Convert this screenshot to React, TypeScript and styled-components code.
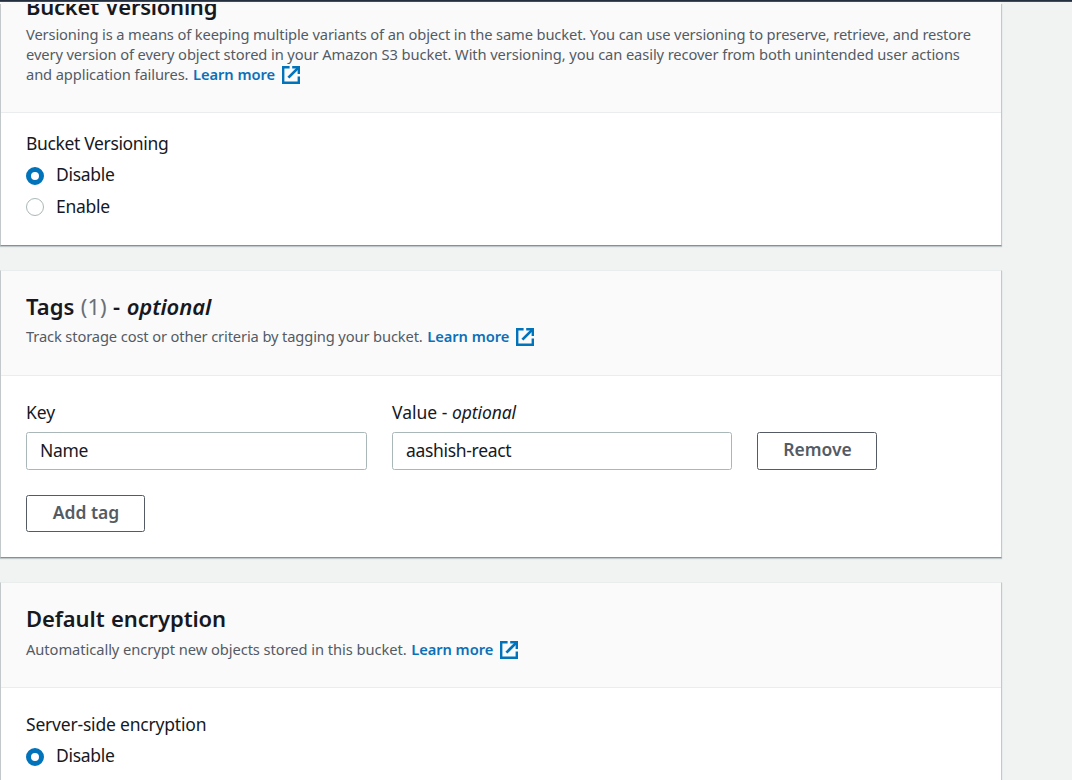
import React, { useState } from 'react';
import styled, { createGlobalStyle } from 'styled-components';

const GlobalStyle = createGlobalStyle`
  *, *::before, *::after { box-sizing: border-box; }
  html, body { margin: 0; padding: 0; height: 100%; background: #f1f3f3; }
  body, input, button { font-family: 'Noto Sans', 'Open Sans', sans-serif; }
`;

const Page = styled.div`
  display: flex;
  flex-direction: column;
  height: 780px;
  overflow: hidden;
  background: #f1f3f3;
  color: #16191f;
`;

const TopBar = styled.div`
  flex: none;
  height: 2px;
  background: #232f3e;
  border-bottom: 1px solid #414b5a;
`;

const Gutter = styled.div`
  flex: none;
  height: 2px;
  width: 1001px;
  background: #f9f9f9;
`;

const ScrollArea = styled.main`
  flex: 1;
  min-height: 0;
  overflow: hidden;
`;

const Stack = styled.div`
  display: flex;
  flex-direction: column;
  gap: 24px;
  width: 1002px;
  margin-top: -34px;
`;

const Card = styled.section`
  background: #ffffff;
  border: 1px solid #c3c9cb;
  border-top-color: #eaeded;
  border-bottom-color: #879193;
  box-shadow: 0 1px 1px rgba(0, 28, 36, 0.2);
`;

const CardHeader = styled.header<{ $gap: number; $bottom: number }>`
  display: flex;
  flex-direction: column;
  gap: ${(p) => p.$gap}px;
  padding: 21px 25px ${(p) => p.$bottom}px;
  background: #fafafa;
  border-bottom: 1px solid #eaeded;
`;

const Title = styled.h2<{ $tracking?: number }>`
  margin: 0;
  font-size: 22px;
  line-height: 28px;
  font-weight: 600;
  white-space: pre;
  word-spacing: 0.8px;
  letter-spacing: ${(p) => p.$tracking ?? 0}px;
`;

const Counter = styled.span`
  font-weight: 400;
  color: #687078;
`;

const Optional = styled.em`
  font-style: italic;
  letter-spacing: -0.08px;
`;

const Description = styled.div`
  font-size: 14.7px;
  color: #545b64;
`;

const Line = styled.div<{ $tracking: number; $height?: number }>`
  display: flex;
  align-items: center;
  height: ${(p) => p.$height ?? 20}px;
  white-space: pre;
  letter-spacing: ${(p) => p.$tracking}px;
`;

const Link = styled.a`
  display: inline-flex;
  align-items: center;
  gap: 6px;
  margin-left: 4.5px;
  color: #0b70b8;
  font-weight: 600;
  letter-spacing: -0.05px;
  text-decoration: none;
`;

const LinkIcon = styled.svg`
  flex: none;
  width: 20px;
  height: 20px;
  margin-top: 2px;
`;

const CardBody = styled.div<{ $top: number; $bottom?: number }>`
  display: flex;
  flex-direction: column;
  align-items: flex-start;
  padding: ${(p) => p.$top}px 25px ${(p) => p.$bottom ?? 25}px;
`;

const Label = styled.div<{ $tracking?: number }>`
  height: 22px;
  font-size: 17.5px;
  line-height: 22px;
  letter-spacing: ${(p) => p.$tracking ?? 0}px;
  white-space: nowrap;
`;

const RadioList = styled.div`
  display: flex;
  flex-direction: column;
  gap: 10px;
  margin-top: 9px;
`;

const RadioInput = styled.input`
  appearance: none;
  flex: none;
  width: 18px;
  height: 18px;
  margin: 2px 0 0;
  border: 1.5px solid #aab7b8;
  border-radius: 50%;
  background: #ffffff;

  &:checked {
    border: 5px solid #0073bb;
  }
`;

const RadioRow = styled.label`
  display: flex;
  align-items: center;
  gap: 12px;
  height: 22px;
  font-size: 17.5px;
  line-height: 22px;
  letter-spacing: -0.28px;

  &:first-child ${RadioInput} {
    margin-top: 4px;
  }
`;

const TagGrid = styled.div`
  display: grid;
  grid-template-columns: 341px 340px 120px;
  column-gap: 25px;
  row-gap: 9px;
  align-items: end;
`;

const TextInput = styled.input`
  grid-row: 2;
  width: 100%;
  height: 38px;
  padding: 0 13px 3px;
  border: 1px solid #aab7b8;
  border-radius: 2.5px;
  background: #ffffff;
  color: #16191f;
  font-size: 17.5px;
  letter-spacing: -0.32px;
  outline: none;
`;

const Button = styled.button<{ $width: number; $height: number }>`
  grid-row: 2;
  width: ${(p) => p.$width}px;
  height: ${(p) => p.$height}px;
  padding: 0 0 4px 1px;
  border: 1px solid #545b64;
  border-radius: 2.5px;
  background: #ffffff;
  color: #545b64;
  font-size: 17.5px;
  font-weight: 600;
`;

const AddRow = styled.div`
  margin-top: 25px;
  display: flex;
`;

const ExternalIcon = () => (
  <LinkIcon viewBox="0 0 20 20" fill="none" stroke="#0073bb" strokeWidth="2.4">
    <path d="M8.6 2.2H2.2V17.8H17.8V11.6" />
    <path d="M11.2 2.2H17.8V8.9" />
    <path d="M17.4 2.6L7.4 12.6" strokeWidth="2.7" />
  </LinkIcon>
);

const LearnMore = () => (
  <Link href="#">
    Learn more
    <ExternalIcon />
  </Link>
);

type RadioProps = { name: string; label: string; checked: boolean; onSelect: () => void };

const Radio = ({ name, label, checked, onSelect }: RadioProps) => (
  <RadioRow>
    <RadioInput type="radio" name={name} checked={checked} onChange={onSelect} />
    {label}
  </RadioRow>
);

export default function App() {
  const [versioning, setVersioning] = useState('Disable');
  const [encryption, setEncryption] = useState('Disable');
  const [tagKey, setTagKey] = useState('Name');
  const [tagValue, setTagValue] = useState('aashish-react');

  return (
    <Page>
      <GlobalStyle />
      <TopBar />
      <Gutter />
      <ScrollArea>
        <Stack>
          <Card>
            <CardHeader $gap={4} $bottom={28}>
              <Title $tracking={-0.25}>Bucket Versioning</Title>
              <Description>
                <Line $tracking={-0.127} $height={19.5}>
                  Versioning is a means of keeping multiple variants of an object in the same bucket. You can use versioning to preserve, retrieve, and restore
                </Line>
                <Line $tracking={-0.1} $height={20.5}>
                  every version of every object stored in your Amazon S3 bucket. With versioning, you can easily recover from both unintended user actions
                </Line>
                <Line $tracking={-0.11}>
                  and application failures.
                  <LearnMore />
                </Line>
              </Description>
            </CardHeader>
            <CardBody $top={19} $bottom={28}>
              <Label $tracking={-0.35}>Bucket Versioning</Label>
              <RadioList>
                {['Disable', 'Enable'].map((option) => (
                  <Radio
                    key={option}
                    name="versioning"
                    label={option}
                    checked={versioning === option}
                    onSelect={() => setVersioning(option)}
                  />
                ))}
              </RadioList>
            </CardBody>
          </Card>

          <Card>
            <CardHeader $gap={6} $bottom={29}>
              <Title>
                Tags <Counter>(1)</Counter> - <Optional>optional</Optional>
              </Title>
              <Description>
                <Line $tracking={-0.13}>
                  Track storage cost or other criteria by tagging your bucket.
                  <LearnMore />
                </Line>
              </Description>
            </CardHeader>
            <CardBody $top={25}>
              <TagGrid>
                <Label>Key</Label>
                <Label>
                  Value - <Optional>optional</Optional>
                </Label>
                <TextInput aria-label="Key" value={tagKey} onChange={(e) => setTagKey(e.target.value)} />
                <TextInput aria-label="Value" value={tagValue} onChange={(e) => setTagValue(e.target.value)} />
                <Button type="button" $width={120} $height={38}>
                  Remove
                </Button>
              </TagGrid>
              <AddRow>
                <Button type="button" $width={119} $height={37}>
                  Add tag
                </Button>
              </AddRow>
            </CardBody>
          </Card>

          <Card>
            <CardHeader $gap={7} $bottom={28}>
              <Title $tracking={-0.1}>Default encryption</Title>
              <Description>
                <Line $tracking={-0.06}>
                  Automatically encrypt new objects stored in this bucket.
                  <LearnMore />
                </Line>
              </Description>
            </CardHeader>
            <CardBody $top={25} $bottom={40}>
              <Label $tracking={-0.2}>Server-side encryption</Label>
              <RadioList>
                <Radio
                  name="encryption"
                  label="Disable"
                  checked={encryption === 'Disable'}
                  onSelect={() => setEncryption('Disable')}
                />
              </RadioList>
            </CardBody>
          </Card>
        </Stack>
      </ScrollArea>
    </Page>
  );
}
